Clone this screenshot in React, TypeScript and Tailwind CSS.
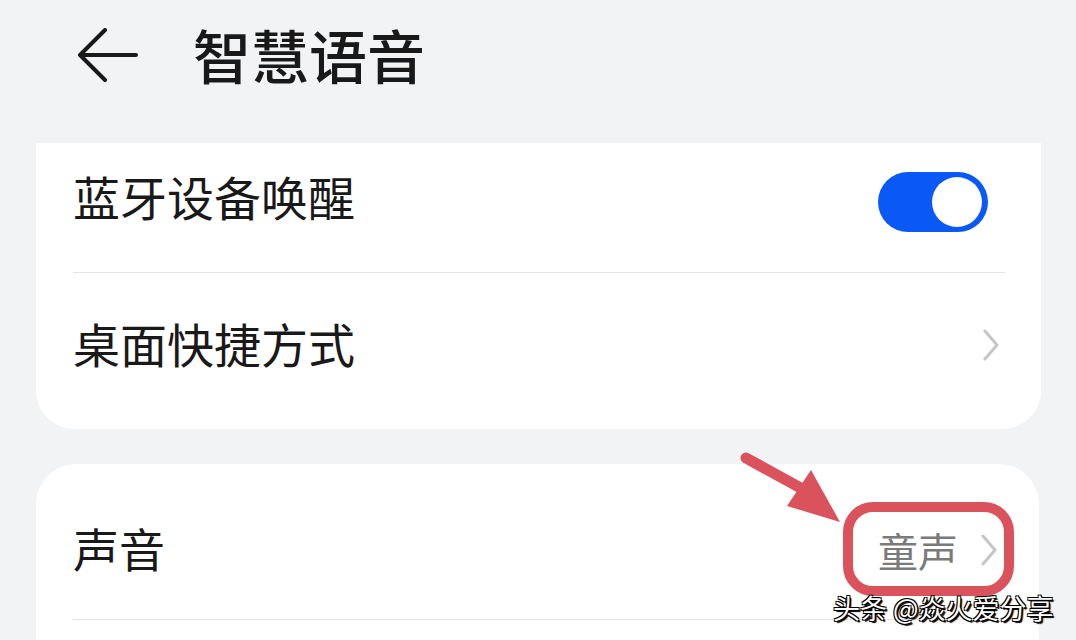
import React from "react";

const font = { fontFamily: '"Noto Sans CJK SC", "Noto Sans", sans-serif' };

function Chevron() {
  return (
    <svg width="18" height="32" viewBox="0 0 18 32" className="shrink-0">
      <path d="M3 2 L15 16 L3 30" fill="none" stroke="#c6c6c6" strokeWidth="3" strokeLinecap="round" strokeLinejoin="round" />
    </svg>
  );
}

export default function App() {
  return (
    <div className="relative w-[1076px] h-[640px] overflow-hidden bg-[#f1f3f5] text-[#191919]" style={font}>
      {/* Header */}
      <div className="h-[143px] flex items-center pl-[77px] pb-[28px]">
        <svg width="62" height="56" viewBox="0 0 62 56" className="shrink-0 mb-[4px]">
          <path d="M28 2 L3 27 L28 52 M3 27 L59 27" fill="none" stroke="#1a1a1a" strokeWidth="4" strokeLinecap="round" strokeLinejoin="round" />
        </svg>
        <div className="ml-[54px] mb-[8px] text-[58px] leading-none font-medium">智慧语音</div>
      </div>

      {/* Card 1 */}
      <div className="ml-[36px] w-[1005px] bg-white rounded-b-[38px] pl-[37px] pr-[36px]">
        <div className="h-[129px] pb-[12px] flex items-center justify-between">
          <div className="text-[47px] leading-none mb-[12px]">蓝牙设备唤醒</div>
          <div className="mr-[17px] w-[110px] h-[60px] rounded-full bg-[#0a59f7] flex items-center justify-end pr-[6px]">
            <div className="w-[50px] h-[50px] rounded-full bg-white" />
          </div>
        </div>
        <div className="h-px bg-[#e3e3e3]" />
        <div className="h-[156px] flex items-center justify-between pb-[18px]">
          <div className="text-[47px] leading-none">桌面快捷方式</div>
          <div className="mr-[5px] mt-[6px]"><Chevron /></div>
        </div>
      </div>

      {/* Card 2 */}
      <div className="mt-[35px] ml-[36px] w-[1003px] h-[200px] bg-white rounded-t-[40px] pl-[37px] pr-[36px]">
        <div className="h-[155px] pt-[16px] flex items-center justify-between">
          <div className="text-[46px] leading-none mb-[6px]">声音</div>
          <div className="flex items-center gap-[22px] mr-[5px]">
            <div className="text-[40px] leading-none text-[#7a7a7a]">童声</div>
            <Chevron />
          </div>
        </div>
        <div className="h-px bg-[#e3e3e3]" />
      </div>

      {/* Annotation: red box */}
      <div className="absolute left-[843px] top-[502px] w-[171px] h-[94px] rounded-[30px] border-[10px] border-[#da535c]" />
      {/* Annotation: arrow */}
      <svg className="absolute left-0 top-0" width="1076" height="640" viewBox="0 0 1076 640">
        <line x1="746" y1="458" x2="808" y2="492" stroke="#da535c" strokeWidth="11" strokeLinecap="round" />
        <polygon points="811,470 787,506 840,522" fill="#da535c" />
      </svg>

      {/* Watermark */}
      <div
        className="absolute left-[833px] top-[590px] text-[27px] leading-[36px] text-white whitespace-nowrap"
        style={{ textShadow: "1px 1px 0 #000, -1px -1px 0 #000, 1px -1px 0 #000, -1px 1px 0 #000, 2px 2px 1px #000" }}
      >
        头条 @焱火爱分享
      </div>
    </div>
  );
}
